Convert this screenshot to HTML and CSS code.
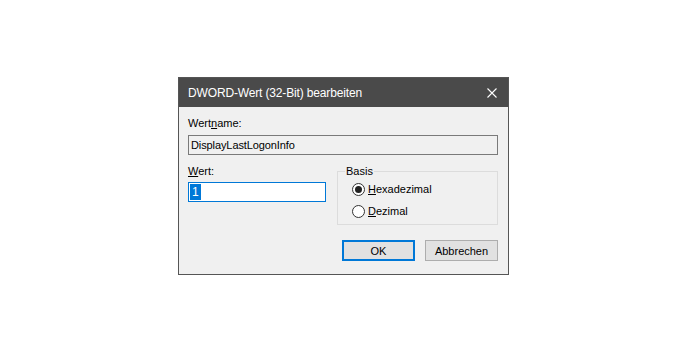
FILE: index.html
```html
<!DOCTYPE html>
<html lang="de">
<head>
<meta charset="utf-8">
<link rel="stylesheet" href="styles.css">
</head>
<body>
<div class="stage">
  <div class="dialog">
    <div class="titlebar">
      <span class="title">DWORD-Wert (32-Bit) bearbeiten</span>
      <svg class="close" width="10" height="10" viewBox="0 0 10 10"><path d="M0.5 0.5L9.5 9.5M9.5 0.5L0.5 9.5" stroke="#ffffff" stroke-width="1.1" fill="none"/></svg>
    </div>
    <div class="body">
      <div class="label first">Wert<u>n</u>ame:</div>
      <div class="textbox readonly">DisplayLastLogonInfo</div>
      <div class="row">
        <div class="leftcol">
          <div class="label"><u>W</u>ert:</div>
          <div class="textbox value"><span class="sel">1</span></div>
        </div>
        <fieldset class="group">
          <legend>Basis</legend>
          <div class="radio"><span class="circle checked"></span><span class="rtext"><u>H</u>exadezimal</span></div>
          <div class="radio"><span class="circle"></span><span class="rtext"><u>D</u>ezimal</span></div>
        </fieldset>
      </div>
      <div class="buttons">
        <div class="btn default">OK</div>
        <div class="btn">Abbrechen</div>
      </div>
    </div>
  </div>
</div>
</body>
</html>
```
FILE: styles.css
```css
html, body {
  margin: 0;
  padding: 0;
  background: #ffffff;
}
.stage {
  width: 688px;
  height: 350px;
  padding: 77px 0 0 178px;
  box-sizing: border-box;
}
.dialog {
  width: 331px;
  height: 198px;
  box-sizing: border-box;
  border: 1px solid #555555;
  background: #f0f0f0;
  font-family: "Liberation Sans", Arial, sans-serif;
  font-size: 11px;
  color: #000000;
}
.titlebar {
  height: 29px;
  background: #4a4a4a;
  display: flex;
  align-items: center;
  justify-content: space-between;
  padding: 0 11px 0 9px;
}
.title {
  color: #ffffff;
  font-size: 12px;
  letter-spacing: -0.15px;
}
.close {
  display: block;
  margin-top: 1px;
}
.body {
  padding: 0 10px 0 9px;
}
.label {
  height: 13px;
  line-height: 13px;
}
.label.first {
  margin-top: 10px;
}
u {
  text-decoration: underline;
  text-underline-offset: 1px;
}
.textbox {
  box-sizing: border-box;
  height: 20px;
  line-height: 18px;
  border: 1px solid #7a7a7a;
  padding-left: 2px;
  white-space: nowrap;
  letter-spacing: -0.1px;
}
.readonly {
  margin-top: 5px;
  background: #f0f0f0;
}
.row {
  display: flex;
  gap: 11px;
  margin-top: 10px;
}
.leftcol {
  width: 138px;
}
.value {
  margin-top: 4px;
  background: #ffffff;
  border-color: #0078d7;
  padding: 1px 0 0 1px;
  display: flex;
  align-items: flex-start;
}
.sel {
  display: block;
  background: #0078d7;
  color: #ffffff;
  padding: 0 2px;
  height: 16px;
  line-height: 16px;
  font-size: 12px;
}
.group {
  width: 161px;
  height: 60px;
  box-sizing: border-box;
  margin: 0;
  border: 1px solid #dcdcdc;
  padding: 0 0 0 7px;
}
.group legend {
  padding: 0 1px;
  line-height: 13px;
  font-size: 11px;
}
.radio {
  display: flex;
  align-items: center;
  height: 22px;
  padding-left: 7px;
}
.circle {
  width: 13px;
  height: 13px;
  box-sizing: border-box;
  border: 1px solid #333333;
  border-radius: 50%;
  background: #ffffff;
  display: flex;
  align-items: center;
  justify-content: center;
}
.circle.checked::after {
  content: "";
  width: 7px;
  height: 7px;
  border-radius: 50%;
  background: #222222;
}
.rtext {
  margin-left: 3px;
}
.buttons {
  display: flex;
  justify-content: flex-end;
  gap: 10px;
  margin-top: 15px;
}
.btn {
  width: 73px;
  height: 21px;
  box-sizing: border-box;
  border: 1px solid #adadad;
  background: #e1e1e1;
  display: flex;
  align-items: center;
  justify-content: center;
}
.btn.default {
  border: 2px solid #0078d7;
}
```
